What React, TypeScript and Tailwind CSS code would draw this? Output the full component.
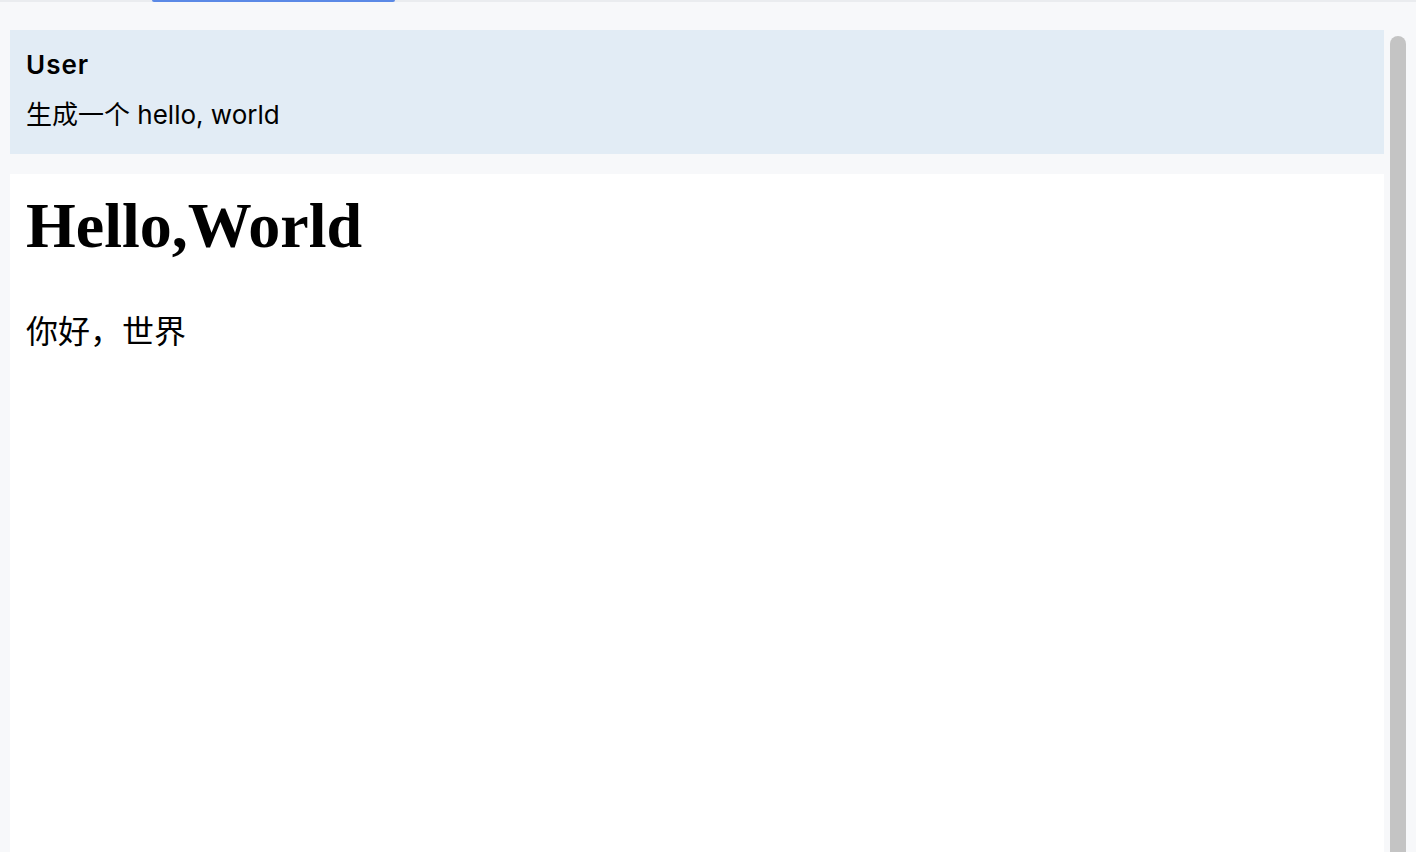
import React from 'react';

const sans = { fontFamily: 'Inter, "Noto Sans CJK SC", sans-serif' };
const serif = { fontFamily: '"Liberation Serif", "Noto Sans CJK SC", serif' };

const TopBar: React.FC = () => (
  <div className="flex h-[2px] bg-[#eaecef]">
    <div className="w-[152px]" />
    <div className="w-[243px] rounded-b-[2px] bg-[#5b89e6]" />
  </div>
);

const UserCard: React.FC = () => (
  <div className="bg-[#e2ecf5] px-4 pt-[19px] pb-[23px] text-black" style={sans}>
    <div className="text-[26px] font-semibold leading-[32px] tracking-[1px]">User</div>
    <div className="mt-[18px] text-[26px] leading-[32px]">生成一个 hello, world</div>
  </div>
);

const Preview: React.FC = () => (
  <div className="flex-1 bg-white px-4 pt-[15px] text-black" style={serif}>
    <h1 className="text-[64px] font-bold leading-[74px]">Hello,World</h1>
    <p className="mt-[51px] text-[32px] leading-[37px]">你好，世界</p>
  </div>
);

export default function App() {
  return (
    <div className="flex h-[852px] flex-col overflow-hidden bg-[#f7f8fa]">
      <TopBar />
      <div className="flex min-h-0 flex-1">
        <div className="flex min-w-0 flex-1 flex-col gap-5 pl-[10px] pt-[28px]">
          <UserCard />
          <Preview />
        </div>
        <div className="ml-[6px] mr-[10px] flex w-4 pt-[34px]">
          <div className="w-full flex-1 rounded-t-full bg-[#c4c4c4]" />
        </div>
      </div>
    </div>
  );
}
